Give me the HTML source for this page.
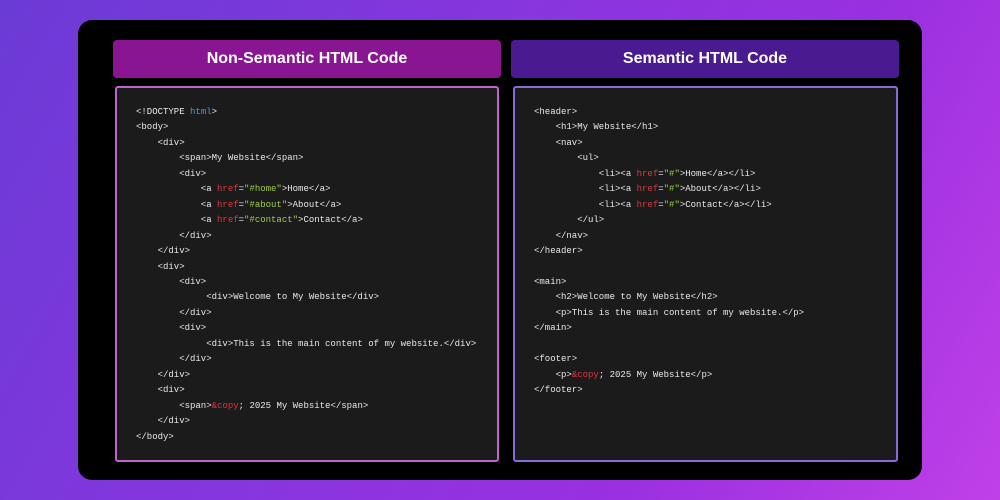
<!DOCTYPE html>
<html><head><style>
*{margin:0;padding:0;box-sizing:border-box}
body{width:1000px;height:500px;overflow:hidden;position:relative;background:linear-gradient(120deg,#6b3bd6 0%,#8a35de 45%,#9a30e0 70%,#c040e8 100%);font-family:"Liberation Sans",sans-serif}
.panel{position:absolute;left:78px;top:20px;width:844px;height:460px;background:#000;border-radius:14px}
.hd{position:absolute;top:40px;height:38px;border-radius:4px;color:#fff;font-weight:bold;font-size:16px;text-align:center;line-height:38px}
.code{position:absolute;top:86px;height:376px;background:#1b1b1b;border-radius:3px;border:2px solid;padding:17px 0 0 19px;font-family:"Liberation Mono",monospace;font-size:9px;line-height:15.45px;color:#e8e8e8;white-space:pre}
.r{color:#e0343c}.g{color:#9ccc4a}.b{color:#3aa0e0}
</style></head><body>
<div class="panel"></div>
<div class="hd" style="left:113px;width:388px;background:#8a1592">Non-Semantic HTML Code</div>
<div class="hd" style="left:511px;width:388px;background:#4a1a90">Semantic HTML Code</div>
<div class="code" style="left:115px;width:384px;border-color:#c064cc">&lt;!DOCTYPE <span class="b">html</span>&gt;
&lt;body&gt;
    &lt;div&gt;
        &lt;span&gt;My Website&lt;/span&gt;
        &lt;div&gt;
            &lt;a <span class="r">href</span>=<span class="g">"#home"</span>&gt;Home&lt;/a&gt;
            &lt;a <span class="r">href</span>=<span class="g">"#about"</span>&gt;About&lt;/a&gt;
            &lt;a <span class="r">href</span>=<span class="g">"#contact"</span>&gt;Contact&lt;/a&gt;
        &lt;/div&gt;
    &lt;/div&gt;
    &lt;div&gt;
        &lt;div&gt;
             &lt;div&gt;Welcome to My Website&lt;/div&gt;
        &lt;/div&gt;
        &lt;div&gt;
             &lt;div&gt;This is the main content of my website.&lt;/div&gt;
        &lt;/div&gt;
    &lt;/div&gt;
    &lt;div&gt;
        &lt;span&gt;<span class="r">&amp;copy</span>; 2025 My Website&lt;/span&gt;
    &lt;/div&gt;
&lt;/body&gt;</div>
<div class="code" style="left:513px;width:385px;border-color:#8a6ad8">&lt;header&gt;
    &lt;h1&gt;My Website&lt;/h1&gt;
    &lt;nav&gt;
        &lt;ul&gt;
            &lt;li&gt;&lt;a <span class="r">href</span>=<span class="g">"#"</span>&gt;Home&lt;/a&gt;&lt;/li&gt;
            &lt;li&gt;&lt;a <span class="r">href</span>=<span class="g">"#"</span>&gt;About&lt;/a&gt;&lt;/li&gt;
            &lt;li&gt;&lt;a <span class="r">href</span>=<span class="g">"#"</span>&gt;Contact&lt;/a&gt;&lt;/li&gt;
        &lt;/ul&gt;
    &lt;/nav&gt;
&lt;/header&gt;

&lt;main&gt;
    &lt;h2&gt;Welcome to My Website&lt;/h2&gt;
    &lt;p&gt;This is the main content of my website.&lt;/p&gt;
&lt;/main&gt;

&lt;footer&gt;
    &lt;p&gt;<span class="r">&amp;copy</span>; 2025 My Website&lt;/p&gt;
&lt;/footer&gt;</div>
</body></html>
